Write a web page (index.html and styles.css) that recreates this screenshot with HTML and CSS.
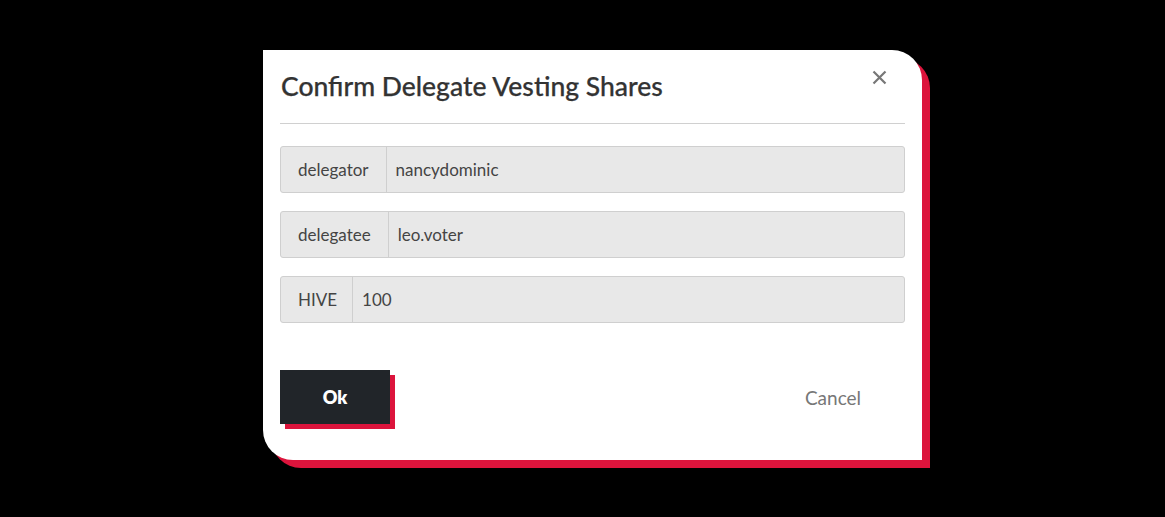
FILE: index.html
```html
<!DOCTYPE html>
<html>
<head>
<meta charset="utf-8">
<link rel="stylesheet" href="styles.css">
</head>
<body>
<div class="stage">
  <div class="modal">
    <div class="modal-header">
      <h2 class="modal-title">Confirm Delegate Vesting Shares</h2>
      <span class="close"><svg width="15" height="15" viewBox="0 0 15 15"><path d="M1.5 1.5 L13.5 13.5 M13.5 1.5 L1.5 13.5" stroke="#777" stroke-width="2.2" fill="none"/></svg></span>
    </div>
    <div class="modal-body">
      <div class="input-group">
        <span class="addon">delegator</span>
        <span class="field">nancydominic</span>
      </div>
      <div class="input-group">
        <span class="addon">delegatee</span>
        <span class="field">leo.voter</span>
      </div>
      <div class="input-group">
        <span class="addon addon-narrow">HIVE</span>
        <span class="field">100</span>
      </div>
    </div>
    <div class="modal-footer">
      <button class="btn-ok">Ok</button>
      <button class="btn-cancel">Cancel</button>
    </div>
  </div>
</div>
</body>
</html>
```
FILE: styles.css
```css
html, body {
  margin: 0;
  padding: 0;
  background: #000;
  font-family: "Lato", "Open Sans", sans-serif;
}
.stage {
  padding: 50px 0 57px 263px;
}
.modal {
  width: 659px;
  height: 410px;
  box-sizing: border-box;
  background: #fff;
  border-radius: 0 30px 0 30px;
  box-shadow: 8px 8px 0 #dc143c;
  padding: 0 17px;
  display: flex;
  flex-direction: column;
}
.modal-header {
  display: flex;
  align-items: flex-start;
  justify-content: space-between;
  border-bottom: 1px solid #d0d0d0;
  padding: 20px 0 21px 1px;
}
.modal-title {
  margin: 0;
  font-size: 26.5px;
  line-height: 32px;
  font-weight: 500;
  color: #333;
  -webkit-text-stroke: 0.25px #333;
}
.close {
  display: flex;
  margin-right: 18px;
}
.modal-body {
  padding-top: 22px;
  display: flex;
  flex-direction: column;
  gap: 18px;
}
.input-group {
  display: flex;
  height: 47px;
  box-sizing: border-box;
  border: 1px solid #cfcfcf;
  border-radius: 3px;
  background: #e8e8e8;
  font-size: 17px;
  color: #444;
}
.addon {
  display: flex;
  align-items: center;
  padding: 0 17px;
  border-right: 1px solid #cfcfcf;
}
.addon-narrow {
  padding: 0 15px 0 17px;
}
.field {
  display: flex;
  align-items: center;
  padding: 0 10px 0 9px;
  flex: 1;
}
.modal-footer {
  margin-top: 47px;
  display: flex;
  justify-content: space-between;
  align-items: center;
}
.btn-ok {
  width: 110px;
  height: 54px;
  border: 0;
  background: #212529;
  color: #fff;
  font-family: inherit;
  font-size: 18px;
  font-weight: 800;
  box-shadow: 5px 5px 0 #dc143c;
  cursor: pointer;
}
.btn-cancel {
  width: 110px;
  height: 54px;
  border: 0;
  background: transparent;
  color: #777;
  font-family: inherit;
  font-size: 19px;
  margin-right: 17px;
}
```
